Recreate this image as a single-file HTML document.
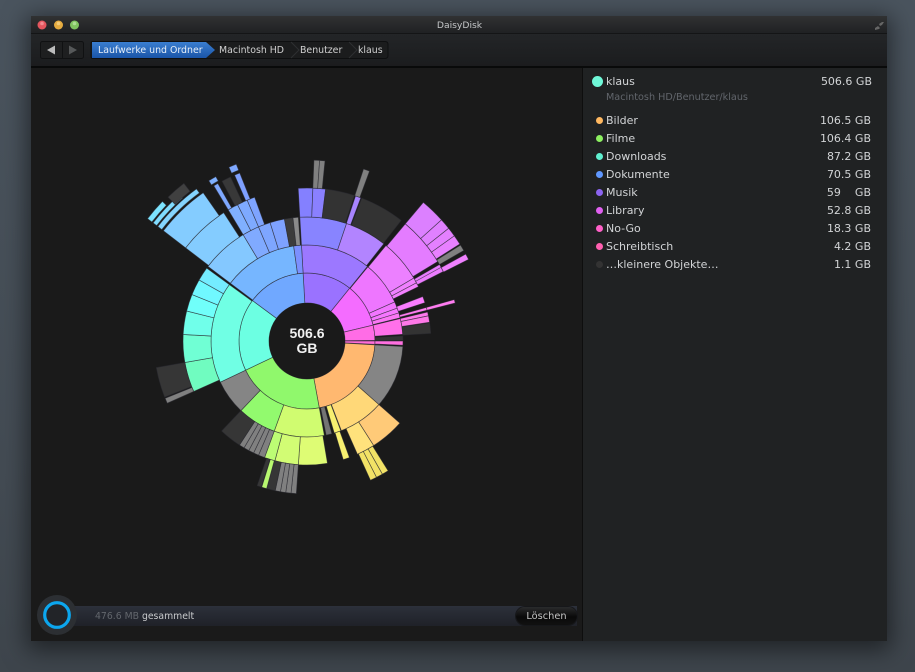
<!DOCTYPE html>
<html><head><meta charset="utf-8"><style>
html,body{margin:0;padding:0;width:915px;height:672px;overflow:hidden;background:#454d55}
body{font-family:"DejaVu Sans","Liberation Sans",sans-serif;position:relative;background:linear-gradient(#4a545e,#434b53 70%,#3e454c)}
#all{position:absolute;left:0;top:0;width:915px;height:672px;filter:blur(.3px)}
.a{position:absolute;white-space:nowrap}
#win{position:absolute;left:31px;top:16px;width:856px;height:625px;background:#1a1a1a;box-shadow:0 5px 22px 4px rgba(0,0,0,.5);overflow:hidden}
.row{position:absolute;left:606px;width:265px;height:18px;line-height:18px;font-size:11px;color:#d2d4d6}
.row b{font-weight:normal;position:absolute;right:0;top:0}
.dot{position:absolute;width:7px;height:7px;border-radius:50%}
.crumb{position:absolute;top:44px;font-size:9.400px;line-height:13px;color:#d0d0d0;white-space:nowrap}
</style></head><body>
<div id="all">
<div id="win"></div>
<div class="a" style="left:31px;top:16px;width:856px;height:18px;background:linear-gradient(#303132,#1f2123);border-bottom:1px solid #141516;box-sizing:border-box"></div>
<div class="a" style="left:31px;top:34px;width:856px;height:32px;background:linear-gradient(#232527,#1b1c1e)"></div>
<div class="a" style="left:31px;top:66px;width:856px;height:2px;background:#090a0a"></div>
<div class="a" style="left:31px;top:68px;width:551px;height:573px;background:#1a1a1a"></div>
<div class="a" style="left:582px;top:68px;width:1px;height:573px;background:#0e0e0e"></div>
<div class="a" style="left:583px;top:68px;width:304px;height:573px;background:#202223"></div>
<div class="a" style="left:0;top:20px;width:919px;text-align:center;font-size:9.200px;line-height:12px;color:#c4c6c8">DaisyDisk</div>
<svg class="a" style="left:0;top:0" width="915" height="70">
<circle cx="42" cy="25" r="4.500" fill="#e4565e"/><circle cx="58.500" cy="25" r="4.500" fill="#e6ac40"/><circle cx="74.500" cy="25" r="4.500" fill="#80c460"/>
<circle cx="42" cy="23.500" r="1.800" fill="#f8a0a4" opacity=".7"/><circle cx="58.500" cy="23.500" r="1.800" fill="#f8d890" opacity=".7"/><circle cx="74.500" cy="23.500" r="1.800" fill="#c0e8a8" opacity=".7"/>
<path d="M875 30l4-1 1-1-2-2-3 2zM880 26l2-1 2-3-2 0-3 2z" fill="#666"/>
<rect x="40.500" y="41.500" width="43" height="17" rx="2" fill="#1e1f20" stroke="#101112"/>
<line x1="62.500" y1="42" x2="62.500" y2="58" stroke="#101112"/>
<path d="M47 50l8-4.500v9z" fill="#bcbcbc"/><path d="M77 50l-8-4.500v9z" fill="#565859"/>
<defs><linearGradient id="bl" x1="0" y1="0" x2="0" y2="1"><stop offset="0" stop-color="#3a7ed0"/><stop offset="1" stop-color="#1a55a8"/></linearGradient></defs>
<path d="M93 41.500H385q3 0 3 3v11q0 3-3 3H93q-2 0-2-2v-13q0-2 2-2z" fill="#1b1c1d" stroke="#0e0f10"/>
<path d="M92 42H206L215 50 206 58H92z" fill="url(#bl)"/>
<path d="M291 42l8 8-8 8M349 42l8 8-8 8" fill="none" stroke="#2e3032"/>
</svg>
<div class="crumb" style="left:98px;color:#e6eef8">Laufwerke und Ordner</div>
<div class="crumb" style="left:219px">Macintosh HD</div>
<div class="crumb" style="left:300px">Benutzer</div>
<div class="crumb" style="left:358px">klaus</div>

<svg id="chart" class="a" style="left:0;top:0" width="582" height="600"></svg>
<div class="a" style="left:257px;top:326px;width:100px;text-align:center;font-family:'Liberation Sans',sans-serif;font-size:14px;font-weight:bold;line-height:15px;color:#f0f0f0">506.6<br>GB</div>

<div class="a" style="left:592px;top:76px;width:11px;height:11px;border-radius:50%;background:#70f8d8"></div>
<div class="row" style="top:73px;width:266px">klaus<b>506.6 GB</b></div>
<div class="a" style="left:606px;top:92px;font-size:9.650px;line-height:12px;color:#62666c">Macintosh HD/Benutzer/klaus</div>

<div class="dot" style="left:596px;top:117px;background:#ffb860"></div><div class="row" style="top:112px">Bilder<b>106.5 GB</b></div>
<div class="dot" style="left:596px;top:135px;background:#8cf060"></div><div class="row" style="top:130px">Filme<b>106.4 GB</b></div>
<div class="dot" style="left:596px;top:153px;background:#60f0d0"></div><div class="row" style="top:148px">Downloads<b>87.2 GB</b></div>
<div class="dot" style="left:596px;top:171px;background:#6098ff"></div><div class="row" style="top:166px">Dokumente<b>70.5 GB</b></div>
<div class="dot" style="left:596px;top:189px;background:#8c64f0"></div><div class="row" style="top:184px">Musik<b>59<span style="visibility:hidden">.0</span> GB</b></div>
<div class="dot" style="left:596px;top:207px;background:#e060f0"></div><div class="row" style="top:202px">Library<b>52.8 GB</b></div>
<div class="dot" style="left:596px;top:225px;background:#ff60c8"></div><div class="row" style="top:220px">No-Go<b>18.3 GB</b></div>
<div class="dot" style="left:596px;top:243px;background:#ff60b0"></div><div class="row" style="top:238px">Schreibtisch<b>4.2 GB</b></div>
<div class="dot" style="left:596px;top:261px;background:#333"></div><div class="row" style="top:256px">…kleinere Objekte…<b>1.1 GB</b></div>

<div class="a" style="left:57px;top:606px;width:520px;height:20px;background:linear-gradient(#2c303a,#1f2128)"></div>
<svg class="a" style="left:30px;top:590px" width="60" height="50">
<circle cx="27" cy="25" r="20" fill="#2c2f33"/>
<circle cx="27" cy="25" r="12.300" fill="#222428" stroke="#0ca6ee" stroke-width="3.200"/>
</svg>
<div class="a" style="left:95px;top:610px;font-size:9.300px;line-height:13px;color:#63676d">476.6 MB <span style="color:#c8cacc">gesammelt</span></div>
<div class="a" style="left:516px;top:607px;width:61px;height:18px;border-radius:9px;background:linear-gradient(#2a2b2c,#0a0a0a 55%,#111);box-shadow:0 0 0 1px #16171a;text-align:center;font-size:9.800px;line-height:19px;color:#c4c4c4">Löschen</div>
</div>

<script>
var R=[38,68,96,124,153,181];
var S=[
// ring 1
[0,1,-3.3,39,'#9a72ff'],[0,1,39,76.5,'#f46cff'],[0,1,76.5,89.5,'#ff6ce6'],[0,1,90,92.8,'#ff6cd8'],
[0,1,93.3,169.6,'#ffb870'],[0,1,169.6,244.6,'#90f86c'],[0,1,244.6,306.6,'#6cffe2'],[0,1,306.6,356.7,'#70a8ff'],
// ring 2
[1,2,-3.3,39,'#9c78ff'],[1,2,39.4,66,'#ee76ff'],[1,2,66,70,'#f276ff'],[1,2,70,73,'#f676ff'],[1,2,73,76,'#fa76f4'],
[1,2,76.5,86,'#ff70ea'],[1,2,87,89.6,'#333333'],[1,2,90,92.5,'#ff70e0'],
[1,2,93.3,131.5,'#858585'],[1,2,131.5,159,'#ffd878'],[1,2,159.4,163.5,'#f8f070'],[1,2,165,168.5,'#747474'],
[1,2,169.6,200,'#d0fc70'],[1,2,200,223.5,'#92fa6e'],[1,2,223.5,244.6,'#858585'],[1,2,244.6,306,'#70ffe4'],
[1,2,307,352,'#76b6ff'],[1,2,352,356.7,'#7c90ff'],
// ring 3
[2,3,-3.3,18.6,'#8884ff'],[2,3,18.6,38.3,'#b284ff'],[2,3,39.6,59.5,'#ec80ff'],[2,3,59.5,62,'#f080ff'],[2,3,62,64,'#f480ff'],
[2,3,69,72,'#f97cff'],[2,3,74.3,75.6,'#ff7cf0'],[2,3,76.5,78.3,'#ff78ec'],[2,3,78.3,81.3,'#ff78e8'],[2,3,81.6,86.5,'#333333'],
[2,3,131.5,147.5,'#ffca78'],[2,3,147.5,156,'#ffe27c'],[2,3,160,163,'#f8f070'],
[2,3,170.5,184,'#defc74'],[2,3,184,195,'#d2fc74'],[2,3,195,200,'#bcfc74'],
[2,3,200,203,'#808080'],[2,3,203,205.500,'#808080'],[2,3,205.500,208,'#808080'],[2,3,208,210.500,'#808080'],[2,3,210.500,213,'#808080'],
[2,3,213,223.5,'#363636'],
[2,3,246,260,'#70fcc0'],[2,3,260,273,'#70ffd4'],[2,3,273,284,'#70ffea'],[2,3,284,292,'#70fffa'],[2,3,292,299.5,'#70f8ff'],[2,3,299.5,306,'#74ecff'],
[2,3,307,329,'#84c8ff'],[2,3,329,337,'#80aaff'],[2,3,337,342.7,'#7ea6ff'],[2,3,342.7,349.5,'#7ea2ff'],[2,3,349.5,353.5,'#3c3c3c'],[2,3,353.5,356,'#8a8a8a'],
// ring 4
[3,4,-3.3,2.2,'#8480ff'],[3,4,2.2,7,'#8a80ff'],[3,4,7,18,'#333333'],[3,4,18.5,20.6,'#a884ff'],[3,4,21,38,'#333333'],
[3,4,40,58.7,'#e47cff'],[3,4,60,62,'#e87cff'],[3,4,61.200,63,'#ec7cff'],[3,4,74.3,75.6,'#ff7cf0'],
[3,4,148,150.5,'#f2e266'],[3,4,150.5,153,'#f2e266'],[3,4,153,155.5,'#f2e266'],
[3,4,184,186,'#808080'],[3,4,186,188,'#808080'],[3,4,188,190,'#808080'],[3,4,190,192,'#808080'],
[3,4,192,195.2,'#363636'],[3,4,195.3,197.2,'#b8f870'],[3,4,197.4,199,'#363636'],
[3,4,246,248,'#808080'],[3,4,248.5,260,'#363636'],
[3,4,307.500,327,'#84ccff'],[3,4,329,333,'#80b0ff'],[3,4,333,337,'#7eaaff'],[3,4,337,340,'#7ea4ff'],
// ring 5
[4,5,2.2,4,'#808080'],[4,5,4,5.7,'#808080'],[4,5,18.2,20.2,'#808080'],
[4,5,40,48,'#dc80ff'],[4,5,48,51.5,'#e080ff'],[4,5,51.5,54.5,'#e480ff'],[4,5,54.5,57.6,'#e880ff'],[4,5,58,60,'#808080'],[4,5,61.3,63.2,'#f080ff'],
[4,5,307.5,325,'#84ccff'],[4,5,329,330.5,'#7ea8ff'],[4,5,332,335,'#383838'],[4,5,336.4,338.2,'#7ea0ff']
];
var X=[
[183,188,307.5,324,'#84d4ff'],[189.5,194,307.5,319,'#80dcff'],[195.5,201,307.5,314,'#7ce4ff'],[190,200,316,322,'#404040'],
[183,188,328.5,331,'#7eb0ff'],[184,190.5,335.8,338.2,'#7ea8ff']
];
var cx=307,cy=341,h='';
function P(r,a){a=a*Math.PI/180;return (cx+r*Math.sin(a)).toFixed(2)+' '+(cy-r*Math.cos(a)).toFixed(2)}
function W(r0,r1,a0,a1,c){if(a1<=a0)return;var l=(a1-a0)>180?1:0;
h+='<path d="M'+P(r0,a0)+'L'+P(r1,a0)+'A'+r1+' '+r1+' 0 '+l+' 1 '+P(r1,a1)+'L'+P(r0,a1)+'A'+r0+' '+r0+' 0 '+l+' 0 '+P(r0,a0)+'Z" fill="'+c+'" stroke="#2a2a30" stroke-opacity=".7" stroke-width=".7"/>'}
S.forEach(function(s){W(R[s[0]],R[s[1]],s[2],s[3],s[4])});
X.forEach(function(s){W(s[0],s[1],s[2],s[3],s[4])});
h+='<circle cx="'+cx+'" cy="'+cy+'" r="38" fill="#1a1a1a"/>';
document.getElementById('chart').innerHTML=h;
</script>
</body></html>
